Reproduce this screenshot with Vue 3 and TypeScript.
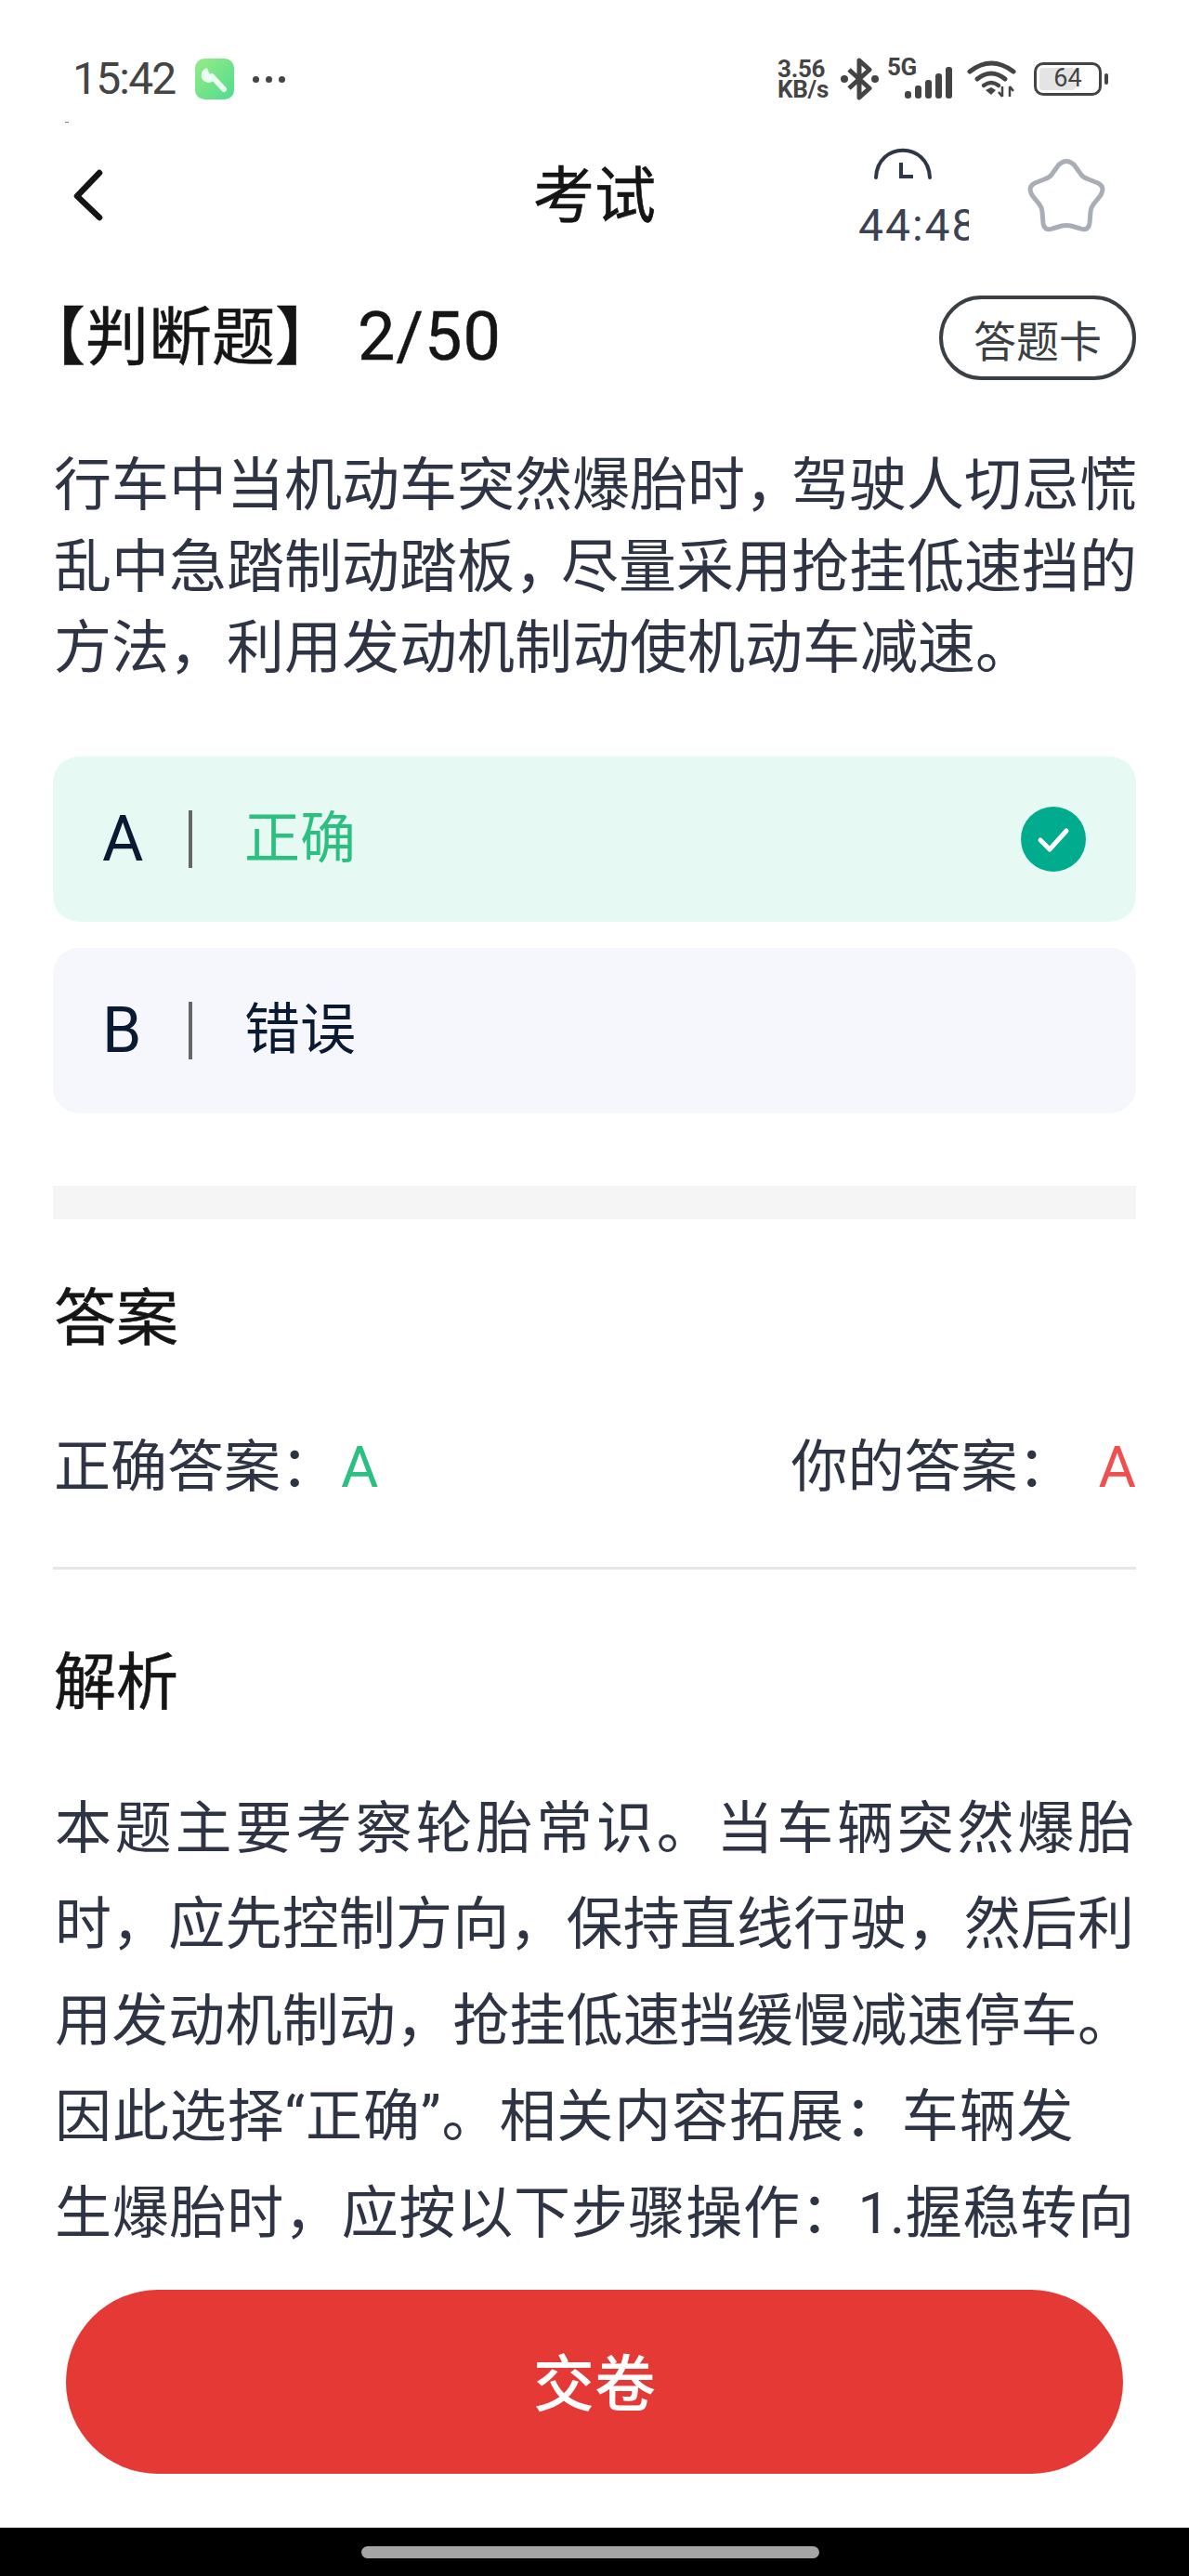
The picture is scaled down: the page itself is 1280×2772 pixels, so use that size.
<script setup lang="ts">
interface Option {
  key: string;
  label: string;
  picked: boolean;
}

const options: Option[] = [
  { key: "A", label: "正确", picked: true },
  { key: "B", label: "错误", picked: false },
];

const analysis: string[] = [
  "本题主要考察轮胎常识。当车辆突然爆胎",
  "时，应先控制方向，保持直线行驶，然后利",
  "用发动机制动，抢挂低速挡缓慢减速停车。",
  "因此选择“正确”。相关内容拓展：车辆发",
  "生爆胎时，应按以下步骤操作：1.握稳转向",
];
</script>

<template>
  <div class="page">
    <header class="status">
      <span class="dash"></span>
      <span class="time">15:42</span>
      <svg class="app-icon" width="42" height="44" viewBox="0 0 42 44">
        <defs>
          <linearGradient id="wrenchBg" x1="0" y1="0" x2="1" y2="1">
            <stop offset="0" stop-color="#97ec86" />
            <stop offset="1" stop-color="#4fdb8f" />
          </linearGradient>
        </defs>
        <rect width="42" height="44" rx="10" fill="url(#wrenchBg)" />
        <path d="M18 19 L31 33" stroke="#eafff0" stroke-width="6" stroke-linecap="round" />
        <path d="M13 10 A8 8 0 1 0 22 21 L16 17 L14 13 Z" fill="#eafff0" />
      </svg>
      <span class="dots"><i></i><i></i><i></i></span>
      <div class="status-right">
        <div class="speed"><span>3.56</span><span>KB/s</span></div>
        <svg class="bt" width="41" height="46" viewBox="0 0 41 46">
          <path d="M9 13 L31 33 L20 43 V3 L31 13 L9 33" fill="none" stroke="#444" stroke-width="5" stroke-linejoin="round" />
          <circle cx="4" cy="23" r="4" fill="#444" />
          <circle cx="37" cy="23" r="4" fill="#444" />
        </svg>
        <div class="signal">
          <span class="five-g">5G</span>
          <svg width="52" height="34" viewBox="0 0 52 34">
            <rect x="0" y="26" width="7" height="8" rx="3" fill="#444" />
            <rect x="11" y="20" width="7" height="14" rx="3" fill="#444" />
            <rect x="22" y="14" width="7" height="20" rx="3" fill="#444" />
            <rect x="33" y="7" width="7" height="27" rx="3" fill="#444" />
            <rect x="44" y="0" width="7" height="34" rx="3" fill="#444" />
          </svg>
        </div>
        <svg class="wifi" width="53" height="40" viewBox="0 0 53 40">
          <path d="M3 12 Q26 -6 50 12" fill="none" stroke="#444" stroke-width="5" stroke-linecap="round" />
          <path d="M11 20 Q26 8 41 20" fill="none" stroke="#444" stroke-width="5" stroke-linecap="round" />
          <path d="M18 27 Q26 21 34 27" fill="none" stroke="#444" stroke-width="4.5" stroke-linecap="round" />
          <path d="M20 32 L26 29 L31 32 L26 37 Z" fill="#444" />
          <path d="M38 28 V39 M34 34 L38 39 M46 28 V39 M46 28 L50 33" fill="none" stroke="#444" stroke-width="2.5" />
        </svg>
        <div class="battery">
          <span class="battery-fill"></span>
          <span class="battery-num">64</span>
        </div>
        <span class="battery-nub"></span>
      </div>
    </header>

    <nav class="nav">
      <div class="nav-left">
        <svg width="34" height="56" viewBox="0 0 34 56">
          <path d="M29 4 L5 29 L29 52" fill="none" stroke="#151515" stroke-width="6.5" stroke-linecap="round" stroke-linejoin="round" />
        </svg>
      </div>
      <h1 class="nav-title">考试</h1>
      <div class="nav-right">
        <div class="timer">
          <svg class="timer-icon" width="64" height="34" viewBox="0 0 64 34">
            <path d="M3 32 C5 -7 59 -7 61 32" fill="none" stroke="#2f3747" stroke-width="4" stroke-linecap="round" />
            <path d="M30 16 V31 H43" fill="none" stroke="#2f3747" stroke-width="4" />
          </svg>
          <span class="timer-text">44:48</span>
        </div>
        <svg class="star" width="84" height="81" viewBox="0 0 84 81">
          <path
            d="M34 7 Q42 0 50 7 L58 18 Q60 21 66 23 L76 27 Q84 31 79 40 L71 50 Q68 54 68 58 L67 70 Q66 79 57 76 L47 73 Q42 72 37 73 L27 76 Q18 79 17 70 L16 58 Q16 54 13 50 L5 40 Q0 31 8 27 L18 23 Q24 21 26 18 Z"
            fill="none"
            stroke="#a9aeb6"
            stroke-width="5"
          />
        </svg>
      </div>
    </nav>

    <main class="content">
      <div class="head-row">
        <h2 class="q-type">【判断题】<span class="q-num"> 2/50</span></h2>
        <button class="card-btn">答题卡</button>
      </div>

      <p class="question">
        <span>行车中当机动车突然爆胎时<b class="tight">，</b>驾驶人切忌慌</span>
        <span>乱中急踏制动踏板<b class="tight">，</b>尽量采用抢挂低速挡的</span>
        <span>方法，利用发动机制动使机动车减速。</span>
      </p>

      <div class="options">
        <div v-for="o in options" :key="o.key" class="option" :class="{ picked: o.picked }">
          <span class="opt-key">{{ o.key }}</span>
          <span class="opt-sep"></span>
          <span class="opt-label">{{ o.label }}</span>
          <svg v-if="o.picked" class="opt-check" width="70" height="70" viewBox="0 0 70 70">
            <circle cx="35" cy="35" r="35" fill="#00ab8e" />
            <path d="M21 36 L31 46 L49 26" fill="none" stroke="#fff" stroke-width="5" stroke-linecap="round" stroke-linejoin="round" />
          </svg>
        </div>
      </div>

      <div class="band"></div>

      <h3 class="sec-title first">答案</h3>
      <div class="answer-row">
        <span>正确答案：<em class="right">A</em></span>
        <span>你的答案：<em class="wrong">A</em></span>
      </div>
      <div class="divider"></div>

      <h3 class="sec-title second">解析</h3>
      <div class="analysis">
        <div v-for="(line, i) in analysis" :key="i" class="line" :class="{ short: i === 3 }">{{ line }}</div>
      </div>
    </main>

    <footer class="footer">
      <button class="submit">交卷</button>
    </footer>
    <div class="gesture"><span></span></div>
  </div>
</template>

<style>
html,
body {
  margin: 0;
  background: #fff;
}
</style>

<style scoped>
.page {
  position: relative;
  display: flex;
  flex-direction: column;
  width: 1280px;
  height: 2772px;
  overflow: hidden;
  background: #fff;
  font-family: Roboto, "Noto Sans CJK SC", sans-serif;
  color: #2e3444;
}

.status {
  position: relative;
  display: flex;
  align-items: center;
  flex: none;
  box-sizing: border-box;
  height: 130px;
  padding: 40px 87px 0 78px;
  color: #444;
}

.dash {
  position: absolute;
  left: 70px;
  top: 131px;
  width: 4px;
  height: 1px;
  background: #777;
}

.time {
  font-size: 48px;
  letter-spacing: -1.8px;
  line-height: 1;
  margin-right: 21px;
}

.dots {
  display: flex;
  gap: 7px;
  margin-left: 20px;
}

.dots i {
  width: 7px;
  height: 7px;
  border-radius: 50%;
  background: #444;
}

.status-right {
  display: flex;
  align-items: center;
  margin-left: auto;
}

.speed {
  display: flex;
  flex-direction: column;
  font-size: 26px;
  font-weight: 700;
  line-height: 22px;
  letter-spacing: -0.3px;
  margin-right: 13px;
}

.signal {
  position: relative;
  width: 71px;
  height: 46px;
  margin-left: 9px;
}

.five-g {
  position: absolute;
  left: 0;
  top: -2px;
  font-size: 26px;
  font-weight: 700;
  line-height: 24px;
  letter-spacing: -0.5px;
}

.signal svg {
  position: absolute;
  right: 0;
  bottom: 2px;
}

.wifi {
  margin-left: 15px;
}

.battery {
  position: relative;
  box-sizing: border-box;
  width: 73px;
  height: 36px;
  margin-left: 19px;
  border: 3.5px solid #444;
  border-radius: 10px;
}

.battery-fill {
  position: absolute;
  left: 3px;
  top: 3px;
  bottom: 3px;
  width: 39px;
  border-radius: 4px;
  background: #e4e4e4;
}

.battery-num {
  position: absolute;
  inset: 0;
  text-align: center;
  font-size: 27px;
  line-height: 29px;
}

.battery-nub {
  width: 4px;
  height: 12px;
  margin-left: 3px;
  border-radius: 2px;
  background: #444;
}

.nav {
  display: grid;
  grid-template-columns: 1fr auto 1fr;
  align-items: center;
  flex: none;
  height: 160px;
}

.nav-left {
  padding-left: 78px;
  display: flex;
}

.nav-title {
  margin: 4px 0 0;
  font-size: 66px;
  font-weight: 400;
  -webkit-text-stroke: 0.6px #151515;
  line-height: 90px;
  color: #151515;
}

.nav-right {
  display: flex;
  align-items: center;
  justify-content: flex-end;
  gap: 63px;
  padding-right: 90px;
}

.timer {
  display: flex;
  flex-direction: column;
  width: 119px;
  overflow: hidden;
  margin-top: 6px;
}

.timer-icon {
  margin-left: 16px;
}

.timer-text {
  margin-top: 26px;
  font-size: 48px;
  line-height: 48px;
  letter-spacing: 2px;
  white-space: nowrap;
  color: #3a4254;
}

.content {
  flex: 1;
  min-height: 0;
  overflow: hidden;
  padding: 27px 57px 0;
}

.head-row {
  display: flex;
  align-items: center;
  justify-content: space-between;
}

.q-type {
  margin: 0 0 0 -33px;
  font-size: 68px;
  font-weight: 400;
  -webkit-text-stroke: 0.5px #151515;
  line-height: 91px;
  color: #151515;
  white-space: pre;
}

.q-num {
  font-size: 72px;
  letter-spacing: 1px;
  margin-left: 2px;
}

.card-btn {
  box-sizing: border-box;
  width: 212px;
  height: 91px;
  padding: 0;
  border: 4px solid #3a3f44;
  border-radius: 46px;
  background: #fff;
  font: inherit;
  font-size: 46px;
  color: #3a3f44;
}

.question {
  display: flex;
  flex-direction: column;
  margin: 69px 0 0 1px;
  font-size: 62px;
  line-height: 87.5px;
  white-space: nowrap;
}

.tight {
  font-weight: 400;
  letter-spacing: -12px;
}

.options {
  display: flex;
  flex-direction: column;
  gap: 28px;
  margin-top: 72px;
}

.option {
  display: flex;
  align-items: center;
  height: 178px;
  padding: 0 54px 0 53px;
  border-radius: 28px;
  background: #f5f7fd;
  color: #0b1a33;
}

.option.picked {
  background: #e7f9f3;
}

.opt-key {
  width: 95px;
  font-size: 68px;
  line-height: 1;
}

.opt-sep {
  width: 4px;
  height: 62px;
  margin-right: 56px;
  margin-left: -2px;
  background: #666;
}

.opt-label {
  font-size: 60px;
  line-height: 1;
}

.picked .opt-label {
  color: #2cbf82;
}

.opt-check {
  margin-left: auto;
}

.band {
  height: 36px;
  margin-top: 78px;
  background: #f5f5f5;
}

.sec-title {
  margin: 0 0 0 1px;
  font-size: 67px;
  font-weight: 400;
  -webkit-text-stroke: 0.5px #151515;
  line-height: 90px;
  color: #151515;
}

.sec-title.first {
  margin-top: 62px;
}

.sec-title.second {
  margin-top: 77px;
}

.answer-row {
  display: flex;
  justify-content: space-between;
  margin: 70px 0 0 1px;
  font-size: 61px;
  line-height: 90px;
}

.answer-row em {
  font-style: normal;
  font-size: 62px;
}

.right {
  margin-left: 4px;
  color: #2cbf82;
}

.wrong {
  margin-left: 26px;
  color: #f04f4f;
}

.divider {
  height: 3px;
  margin-top: 62px;
  background: #e6e6e6;
}

.analysis {
  margin-top: 61px;
  padding: 0 2px;
  font-size: 61px;
  line-height: 103.5px;
}

.line {
  white-space: nowrap;
  text-align: justify;
  text-align-last: justify;
}

.line.short {
  text-align-last: left;
  letter-spacing: 0.9px;
}

.footer {
  flex: none;
  box-sizing: border-box;
  height: 308px;
  padding: 52px 71px 58px;
  background: #fff;
}

.submit {
  display: block;
  width: 100%;
  height: 198px;
  padding: 0 0 6px;
  border: none;
  border-radius: 99px;
  background: #e53935;
  font: inherit;
  font-size: 66px;
  font-weight: 500;
  color: #fff;
}

.gesture {
  display: flex;
  justify-content: center;
  flex: none;
  box-sizing: border-box;
  height: 52px;
  padding: 20px 9px 0 0;
  background: #000;
}

.gesture span {
  width: 493px;
  height: 13px;
  border-radius: 7px;
  background: #a5a5a5;
}
</style>
